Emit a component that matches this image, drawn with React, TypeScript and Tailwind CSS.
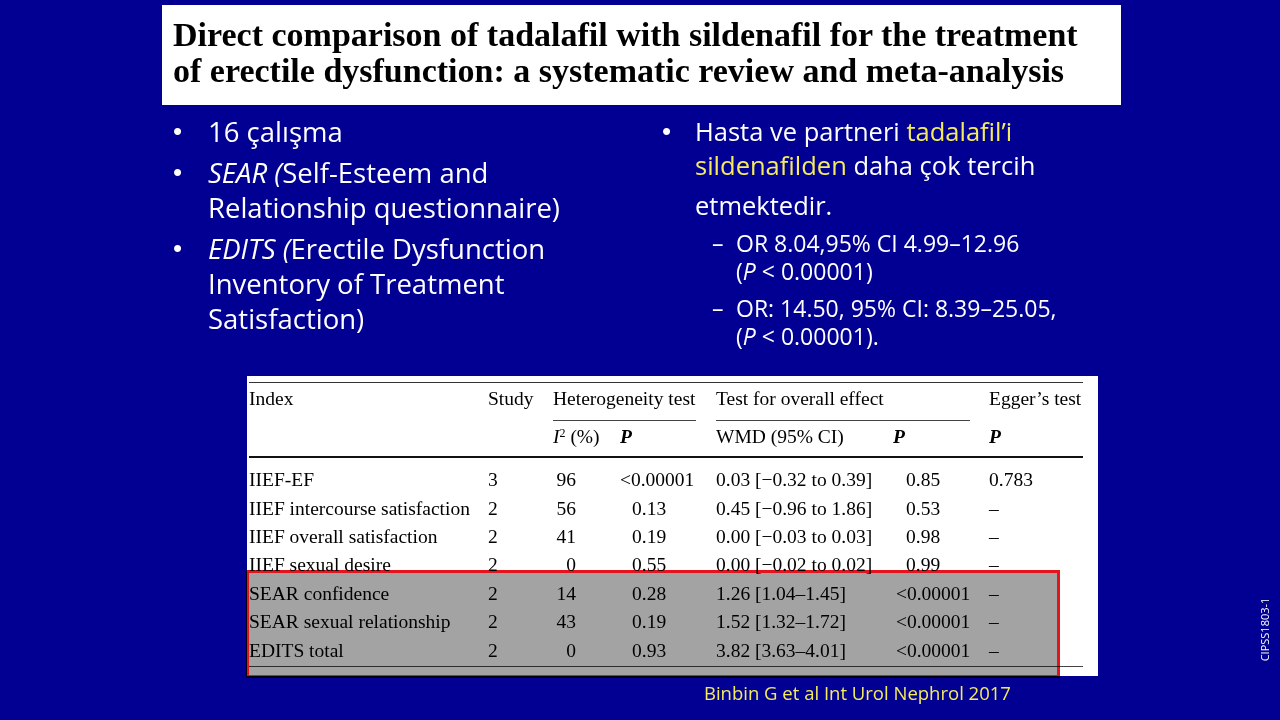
const sans = "font-['Open_Sans','Lato',sans-serif]";
const serif = "font-['Liberation_Serif','Times_New_Roman',serif]";

type Row = {
  name: string;
  study: string;
  i2: string;
  hp: string;
  wmd: string;
  p: string;
  egger: string;
};

const ROWS: Row[] = [
  { name: "IIEF-EF", study: "3", i2: "96", hp: "<0.00001", wmd: "0.03 [\u22120.32 to 0.39]", p: "0.85", egger: "0.783" },
  { name: "IIEF intercourse satisfaction", study: "2", i2: "56", hp: "0.13", wmd: "0.45 [\u22120.96 to 1.86]", p: "0.53", egger: "\u2013" },
  { name: "IIEF overall satisfaction", study: "2", i2: "41", hp: "0.19", wmd: "0.00 [\u22120.03 to 0.03]", p: "0.98", egger: "\u2013" },
  { name: "IIEF sexual desire", study: "2", i2: "0", hp: "0.55", wmd: "0.00 [\u22120.02 to 0.02]", p: "0.99", egger: "\u2013" },
  { name: "SEAR confidence", study: "2", i2: "14", hp: "0.28", wmd: "1.26 [1.04\u20131.45]", p: "<0.00001", egger: "\u2013" },
  { name: "SEAR sexual relationship", study: "2", i2: "43", hp: "0.19", wmd: "1.52 [1.32\u20131.72]", p: "<0.00001", egger: "\u2013" },
  { name: "EDITS total", study: "2", i2: "0", hp: "0.93", wmd: "3.82 [3.63\u20134.01]", p: "<0.00001", egger: "\u2013" },
];

function Dot({ width }: { width: string }) {
  return (
    <span className={`${width} shrink-0 font-['Liberation_Sans',sans-serif] text-[26px]`}>{"\u2022"}</span>
  );
}

function DataRow({ row }: { row: Row }) {
  const hpPad = row.hp.startsWith("<") ? "pl-0" : "pl-[12px]";
  const pPad = row.p.startsWith("<") ? "pl-0" : "pl-[10px]";
  return (
    <div className="flex h-[28.4px] items-center whitespace-nowrap">
      <span className="w-[239px]">{row.name}</span>
      <span className="w-[65px]">{row.study}</span>
      <span className="w-[23px] text-right">{row.i2}</span>
      <span className="w-[44px]" />
      <span className={`w-[96px] ${hpPad}`}>{row.hp}</span>
      <span className="w-[180px]">{row.wmd}</span>
      <span className={`w-[93px] ${pPad}`}>{row.p}</span>
      <span>{row.egger}</span>
    </div>
  );
}

export default function App() {
  return (
    <div className={`relative h-[720px] w-[1280px] overflow-hidden bg-[#020092] text-white ${sans}`}>
      <div className="ml-[162px] mt-[5px] h-[100px] w-[959px] bg-white pl-[11px] pt-[12px]">
        <h1 className={`${serif} whitespace-nowrap text-[34px] font-bold leading-[36px] text-black`}>
          Direct comparison of tadalafil with sildenafil for the treatment
          <br />
          of erectile dysfunction: a systematic review and meta-analysis
        </h1>
      </div>

      <div className="flex pt-[9px]">
        <ul className="ml-[173px] w-[489px] space-y-[6px]">
          <li className="flex leading-[35px]">
            <Dot width="w-[35px]" />
            <div className="text-[27.5px]">16 çalışma</div>
          </li>
          <li className="flex leading-[35px]">
            <Dot width="w-[35px]" />
            <div className="text-[27.5px]">
              <i>SEAR (</i>Self-Esteem and
              <br />
              Relationship questionnaire)
            </div>
          </li>
          <li className="flex leading-[35px]">
            <Dot width="w-[35px]" />
            <div className="text-[27.5px]">
              <i>EDITS (</i>Erectile Dysfunction
              <br />
              Inventory of Treatment
              <br />
              Satisfaction)
            </div>
          </li>
        </ul>
        <div className="w-[460px]">
          <div className="flex leading-[34px]">
            <Dot width="w-[33px]" />
            <div className="text-[25.5px]">
              Hasta ve partneri <span className="text-[#f4ec5c]">tadalafil’i</span>
              <br />
              <span className="text-[#f4ec5c]">sildenafilden</span> daha çok tercih
              <br />
              <span className="mt-[6px] inline-block">etmektedir.</span>
            </div>
          </div>
          <ul className="ml-[50px] mt-[7px] space-y-[9px] text-[23px] leading-[28px]">
            <li className="flex">
              <span className="w-[24px] shrink-0">{"\u2013"}</span>
              <div>
                OR 8.04,95% CI 4.99–12.96
                <br />(<i>P</i> &lt; 0.00001)
              </div>
            </li>
            <li className="flex">
              <span className="w-[24px] shrink-0">{"\u2013"}</span>
              <div>
                OR: 14.50, 95% CI: 8.39–25.05,
                <br />(<i>P</i> &lt; 0.00001).
              </div>
            </li>
          </ul>
        </div>
      </div>

      <div className={`relative ml-[247px] mt-[26px] h-[300px] w-[851px] bg-white pl-[2px] pt-[6px] text-[19.5px] leading-[24px] text-black ${serif}`}>
        <div className="w-[834px] border-t-[1.5px] border-[#333]" />
        <div className="flex pt-[4px] whitespace-nowrap">
          <span className="w-[239px]">Index</span>
          <span className="w-[65px]">Study</span>
          <div className="w-[163px]">
            <div>Heterogeneity test</div>
            <div className="mt-[9px] w-[143px] border-t-[1.5px] border-[#444]" />
          </div>
          <div className="w-[273px]">
            <div>Test for overall effect</div>
            <div className="mt-[9px] w-[254px] border-t-[1.5px] border-[#444]" />
          </div>
          <span>Egger’s test</span>
        </div>
        <div className="flex h-[31px] items-center whitespace-nowrap">
          <span className="w-[304px]" />
          <span className="w-[67px]">
            <i>I</i>
            <sup className="text-[12px]">2</sup> (%)
          </span>
          <span className="w-[96px] font-bold italic">P</span>
          <span className="w-[177px]">WMD (95% CI)</span>
          <span className="w-[96px] font-bold italic">P</span>
          <span className="font-bold italic">P</span>
        </div>
        <div className="mt-[4px] w-[834px] border-t-[2.5px] border-[#111]" />
        <div className="pt-[8px]">
          {ROWS.map((row) => (
            <DataRow key={row.name} row={row} />
          ))}
        </div>
        <div className="mt-[1px] w-[834px] border-t-[1.5px] border-[#444]" />
        <div className="absolute left-[-1px] top-[194px] h-[108px] w-[814px] border-[3px] border-[#e5141c] bg-[#a3a3a3] mix-blend-multiply" />
      </div>

      <p className="ml-[704px] mt-[5px] text-[18.5px] leading-[24px] text-[#f4ec5c]">Binbin G et al Int Urol Nephrol 2017</p>

      <div className="absolute left-[1258px] top-[592px] flex h-[74px] w-[14px] items-center justify-center">
        <span className="-rotate-90 whitespace-nowrap text-[11px] leading-none">CIPSS1803-1</span>
      </div>
    </div>
  );
}
